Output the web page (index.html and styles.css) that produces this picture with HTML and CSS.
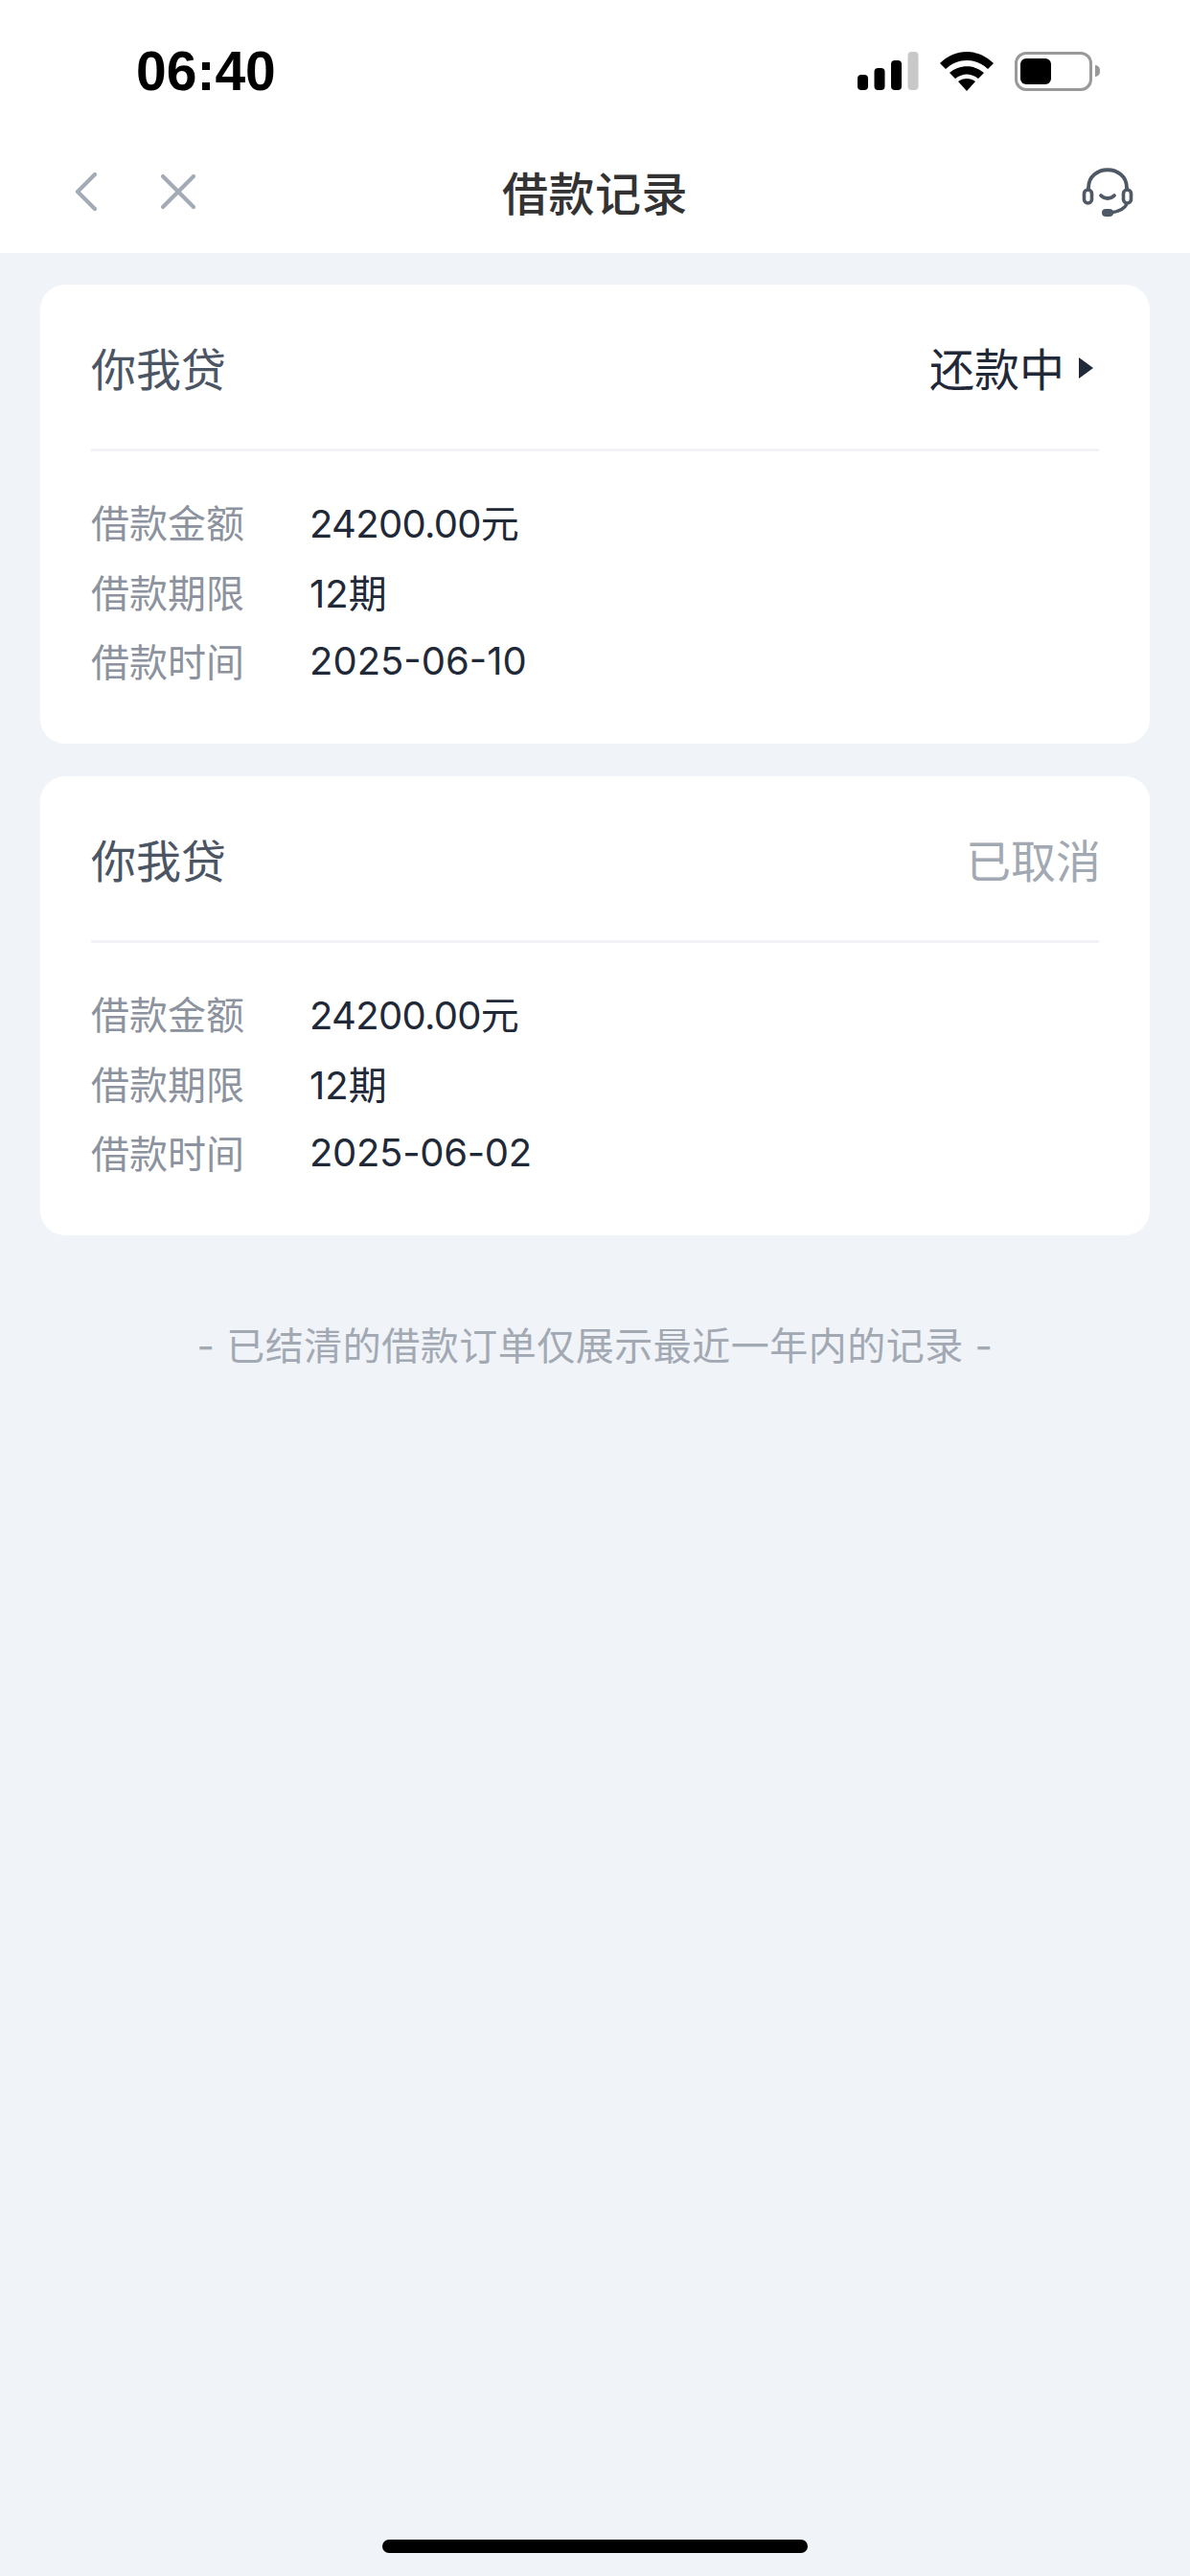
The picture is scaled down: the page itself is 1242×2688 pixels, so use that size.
FILE: index.html
```html
<!DOCTYPE html>
<html>
<head>
    <title>借款记录</title>
    <link rel="stylesheet" href="styles.css">
</head>
<body>
    <div class="top">
        <div class="status-bar">
            <span class="time">06:40</span>
            <div class="status-icons">
                <svg class="signal" width="64" height="40" viewBox="0 0 64 40">
                    <rect x="0" y="24" width="11" height="16" rx="4" fill="#000"/>
                    <rect x="17.5" y="17" width="11" height="23" rx="4" fill="#000"/>
                    <rect x="35" y="9" width="11" height="31" rx="4" fill="#000"/>
                    <rect x="52.5" y="0" width="11" height="40" rx="4" fill="#c8c8c8"/>
                </svg>
                <svg class="wifi" width="56" height="41" viewBox="0 0 56 41">
                    <path d="M0 12 C16 -4 40 -4 56 12 L50 18 C37 6 19 6 6 18 Z" fill="#000"/>
                    <path d="M10 22 C20 13 36 13 46 22 L40 28 C32 22 24 22 16 28 Z" fill="#000"/>
                    <path d="M19 31 C24 27 32 27 37 31 L28 41 Z" fill="#000"/>
                </svg>
                <div class="battery">
                    <div class="battery-body"><div class="battery-level"></div></div>
                    <div class="battery-tip"></div>
                </div>
            </div>
        </div>
        <div class="nav-bar">
            <div class="nav-left">
                <svg width="24" height="40" viewBox="0 0 24 40">
                    <path d="M21 2 L3 20 L21 38" fill="none" stroke="#a3abb6" stroke-width="4.2" stroke-linecap="round" stroke-linejoin="round"/>
                </svg>
                <svg width="38" height="38" viewBox="0 0 38 38">
                    <path d="M3 3 L35 35 M35 3 L3 35" fill="none" stroke="#a3abb6" stroke-width="4.2" stroke-linecap="round"/>
                </svg>
            </div>
            <h1 class="nav-title">借款记录</h1>
            <svg class="nav-service" width="54" height="54" viewBox="0 0 54 54">
                <path d="M7 27 V23 C7 -2 47 -2 47 23 V27" fill="none" stroke="#4f5965" stroke-width="3.8"/>
                <rect x="2.5" y="25" width="8" height="14" rx="4" fill="#fff" stroke="#4f5965" stroke-width="3.6"/>
                <rect x="43.5" y="25" width="8" height="14" rx="4" fill="#fff" stroke="#4f5965" stroke-width="3.6"/>
                <path d="M20 31 C24 35 30 35 34 31" fill="none" stroke="#4f5965" stroke-width="3.8" stroke-linecap="round"/>
                <path d="M47 40 C44 46 38 48 30 49" fill="none" stroke="#4f5965" stroke-width="3.6"/>
                <rect x="21" y="45" width="12" height="8" rx="4" fill="#4f5965"/>
            </svg>
        </div>
    </div>

    <div class="list">
        <div class="card">
            <div class="card-head">
                <span class="card-name">你我贷</span>
                <span class="card-status">还款中<i class="arrow"></i></span>
            </div>
            <div class="card-body">
                <div class="row"><span class="row-label">借款金额</span><span class="row-value tight">24200.00元</span></div>
                <div class="row"><span class="row-label">借款期限</span><span class="row-value">12期</span></div>
                <div class="row"><span class="row-label">借款时间</span><span class="row-value">2025-06-10</span></div>
            </div>
        </div>
        <div class="card">
            <div class="card-head">
                <span class="card-name">你我贷</span>
                <span class="card-status cancelled">已取消</span>
            </div>
            <div class="card-body">
                <div class="row"><span class="row-label">借款金额</span><span class="row-value tight">24200.00元</span></div>
                <div class="row"><span class="row-label">借款期限</span><span class="row-value">12期</span></div>
                <div class="row"><span class="row-label">借款时间</span><span class="row-value dense">2025-06-02</span></div>
            </div>
        </div>
        <p class="note">- 已结清的借款订单仅展示最近一年内的记录 -</p>
    </div>

    <div class="home-indicator"></div>
</body>
</html>
```

FILE: styles.css
```css
html, body {
    margin: 0;
    height: 2688px;
}

body {
    position: relative;
    overflow: hidden;
    background-color: #f0f3f8;
    font-family: Inter, "Noto Sans CJK SC", sans-serif;
    color: #1f2937;
}

.top {
    background-color: white;
    height: 264px;
}

.status-bar {
    height: 136px;
    padding: 12px 94px 0 142px;
    display: flex;
    align-items: center;
    justify-content: space-between;
    box-sizing: border-box;
}

.time {
    font-family: "Liberation Sans", sans-serif;
    font-size: 57px;
    font-weight: 700;
    color: black;
}

.status-icons {
    display: flex;
    align-items: center;
    gap: 22px;
}

.battery {
    display: flex;
    align-items: center;
    gap: 3px;
}

.battery-body {
    width: 81px;
    height: 41px;
    border: 3px solid #999;
    border-radius: 12px;
    padding: 4px 3px;
    box-sizing: border-box;
}

.battery-level {
    width: 32px;
    height: 100%;
    background-color: black;
    border-radius: 6px;
}

.battery-tip {
    width: 5px;
    height: 12px;
    background-color: #999;
    border-radius: 0 6px 6px 0;
}

.nav-bar {
    height: 128px;
    padding: 0 59px 0 78px;
    display: flex;
    align-items: center;
    justify-content: space-between;
    position: relative;
}

.nav-left {
    display: flex;
    align-items: center;
    gap: 65px;
}

.nav-title {
    position: absolute;
    left: 0;
    right: 0;
    margin: -3px 0 0;
    text-align: center;
    font-size: 48px;
    font-weight: 500;
    letter-spacing: 0.5px;
    color: #333;
}

.list {
    padding: 33px 42px 0;
}

.card {
    background-color: white;
    border-radius: 26px;
    padding: 0 53px;
    margin-bottom: 34px;
    height: 479px;
    box-sizing: border-box;
}

.card-head {
    height: 174px;
    display: flex;
    align-items: center;
    justify-content: space-between;
    border-bottom: 3px solid #f1f3f7;
    box-sizing: border-box;
}

.card-name {
    font-size: 47px;
    color: #4b5563;
}

.card-status {
    font-size: 47px;
    display: flex;
    align-items: center;
}

.cancelled {
    color: #a2a9b3;
    margin-right: -2px;
}

.arrow {
    width: 0;
    height: 0;
    margin: 2px 6px 0 15px;
    border-left: 15px solid #1f2937;
    border-top: 11px solid transparent;
    border-bottom: 11px solid transparent;
}

.card-body {
    padding-top: 37px;
}

.row {
    display: flex;
    height: 72.5px;
    align-items: center;
    font-size: 40px;
}

.row-label {
    width: 228px;
    color: #8c939e;
}

.row-value {
    color: #1f2937;
}

.tight {
    letter-spacing: -0.7px;
}

.dense {
    letter-spacing: -0.3px;
}

.note {
    margin: 84px 0 0;
    text-align: center;
    font-size: 40px;
    letter-spacing: 0.5px;
    color: #a2a9b3;
}

.home-indicator {
    position: absolute;
    left: 399px;
    bottom: 24px;
    width: 444px;
    height: 14px;
    border-radius: 7px;
    background-color: black;
}
```
